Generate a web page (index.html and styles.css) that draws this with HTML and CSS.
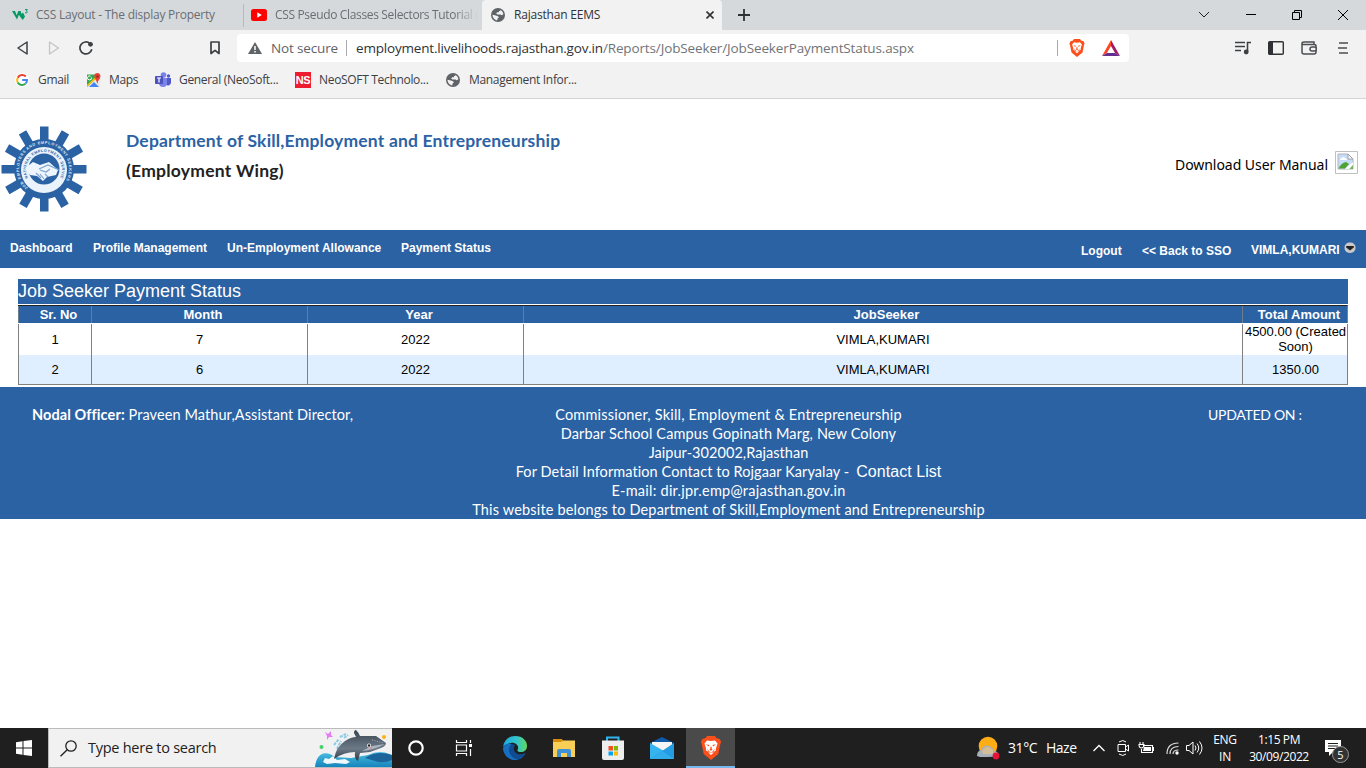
FILE: index.html
```html
<!DOCTYPE html>
<html lang="en">
<head>
<meta charset="utf-8">
<title>Rajasthan EEMS</title>
<link rel="stylesheet" href="styles.css">
</head>
<body>
<svg class="defs" width="0" height="0" aria-hidden="true">
  <defs>
    <symbol id="globe" viewBox="0 0 14 14">
      <circle cx="7" cy="7" r="7" fill="#5f6368"/>
      <path d="M9.300 1.700Q12.300 3.200 12.400 6.300L10.800 7.300 9.600 6.500H6.500L5.200 5.400 6.200 4.300H7.800L8.100 3H9.300Z" fill="#f2f2f2"/>
      <path d="M1.500 6.700 4.900 7.500 7 8.200 7.900 9.500 6.500 10.600 6.400 12.300C3.600 12 1.500 9.700 1.500 6.700Z" fill="#f2f2f2"/>
    </symbol>
    <symbol id="lion" viewBox="0 0 16 18">
      <path d="M4 1.500 5 0H11L12 1.500 14.500 2.200 15.600 4.500 15 6 13.500 13.500 8 18 2.500 13.500 1 6 .4 4.500 1.500 2.200Z" fill="#fb4f1c"/>
      <path d="M5 3.300 8 3.700 11 3.300 12.900 5.600 11.800 9 11.600 11 10 11.800 9.500 13 8 14.300 6.500 13 6 11.800 4.400 11 4.200 9 3.100 5.600Z" fill="#fff"/>
      <path d="M4.200 6.200 6.900 6.800 6.400 7.900ZM11.800 6.200 9.100 6.800 9.600 7.900ZM7.500 8H8.500V9.600L9.200 10.300 8 11.100 6.800 10.300 7.500 9.600ZM5 9.300 6.800 11.600 8 12.200 9.200 11.600 11 9.300 9.700 12.300H6.300Z" fill="#fb4f1c"/>
    </symbol>
  </defs>
</svg>

<header class="browser">
  <div class="tabs">
    <div class="tab tab-one">
      <svg width="16" height="12" viewBox="0 0 16 12"><path d="M0 2H3L4.700 6.300 6.300 2H8.600L9.500 5 11 3.500 13 7.500 10.800 11 8.700 8.500 6.900 5.800 5 10.500Z" fill="#059862"/><path d="M13 .6H15.300L14.300 2Q15.600 2.300 15.200 3.400 14.400 4.300 13 3.700" fill="none" stroke="#059862"/></svg>
      <span class="t-one">CSS Layout - The display Property</span>
    </div>
    <div class="tab tab-two">
      <svg width="16" height="12" viewBox="0 0 16 12"><rect width="16" height="12" rx="2.500" fill="#f00"/><path d="M6.300 3.300 10.800 6 6.300 8.700Z" fill="#fff"/></svg>
      <span class="t-two">CSS Pseudo Classes Selectors Tutorial (</span>
    </div>
    <div class="tab tab-active">
      <svg width="14" height="14"><use href="#globe"/></svg>
      <span class="t-three">Rajasthan EEMS</span>
      <svg class="close" width="8" height="8" viewBox="0 0 8 8"><path d="M.500.500 7.500 7.500M7.500.500.500 7.500" stroke="#303134" stroke-width="1.600"/></svg>
    </div>
    <svg class="plus" width="12" height="12" viewBox="0 0 12 12"><path d="M6 0V12M0 6H12" stroke="#303134" stroke-width="1.800"/></svg>
    <div class="window-buttons">
      <svg width="12" height="10" viewBox="0 0 12 10"><path d="M1 2 6 7 11 2" fill="none" stroke="#222"/></svg>
      <svg width="10" height="10" viewBox="0 0 10 10"><path d="M0 4.500H10" stroke="#000"/></svg>
      <svg width="10" height="10" viewBox="0 0 10 10"><path d="M.500 2.500H7.500V9.500H.500ZM2.500 2V.500H9.500V7.500H8" fill="none" stroke="#000"/></svg>
      <svg width="10" height="10" viewBox="0 0 10 10"><path d="M0 0 10 10M10 0 0 10" stroke="#000"/></svg>
    </div>
  </div>

  <div class="toolbar">
    <div class="history">
      <svg width="12" height="14" viewBox="0 0 12 14"><path d="M10 1V13L1 7Z" fill="none" stroke="#3c4043" stroke-width="1.500" stroke-linejoin="round"/></svg>
      <svg width="12" height="14" viewBox="0 0 12 14"><path d="M1.500 1V13L10.500 7Z" fill="none" stroke="#c2c4c6" stroke-width="1.300" stroke-linejoin="round"/></svg>
      <svg width="14" height="14" viewBox="0 0 14 14"><path d="M11 2.500A6 6 0 1 0 12.800 8.300" fill="none" stroke="#3c4043" stroke-width="1.700"/><circle cx="11.500" cy="3.300" r="2.400" fill="#3c4043"/></svg>
    </div>
    <svg class="bookmark" width="10" height="14" viewBox="0 0 10 14"><path d="M1 1H9V12.500L5 9.300 1 12.500Z" fill="none" stroke="#3c4043" stroke-width="1.700" stroke-linejoin="round"/></svg>
    <div class="address">
      <svg width="14" height="12" viewBox="0 0 14 12"><path d="M7 0 14 12H0Z" fill="#5f6368"/><path d="M7 4V8M7 9V10.500" stroke="#fff" stroke-width="1.500"/></svg>
      <span class="insecure">Not secure</span>
      <i class="bar"></i>
      <span class="url">employment.livelihoods.rajasthan.gov.in<em>/Reports/JobSeeker/JobSeekerPaymentStatus.aspx</em></span>
      <i class="bar bar-end"></i>
      <svg class="brave" width="16" height="18"><use href="#lion"/></svg>
      <svg class="bat" width="18" height="16" viewBox="0 0 18 16"><path d="M9 0 0 16 5 13 9 6Z" fill="#ff4724"/><path d="M9 0 18 16 13 13 9 6Z" fill="#9e1f63"/><path d="M0 16H18L13 13H5Z" fill="#662d91"/></svg>
    </div>
    <div class="tools">
      <svg width="16" height="14" viewBox="0 0 16 14"><path d="M0 1.500H10M0 5.500H10M0 9.500H6M12.500 11V1.500H16" fill="none" stroke="#3c4043" stroke-width="1.600"/><circle cx="11.200" cy="11" r="2.400" fill="#3c4043"/></svg>
      <svg width="16" height="14" viewBox="0 0 16 14"><rect x=".7" y=".7" width="14.600" height="12.600" rx="1" fill="none" stroke="#303134" stroke-width="1.400"/><path d="M1 1H5V13H1Z" fill="#303134"/></svg>
      <svg width="16" height="14" viewBox="0 0 16 14"><path d="M1 2.500V11Q1 13 3 13H13Q15 13 15 11V5Q15 3.500 13 3.500H2Q1 3.500 1 2.500 1 1 3 1H13V3" fill="none" stroke="#4b4e52" stroke-width="1.500"/><rect x="9" y="6" width="6.300" height="4" rx="2" fill="#f2f2f2" stroke="#4b4e52" stroke-width="1.500"/></svg>
      <svg width="10" height="12" viewBox="0 0 10 12"><path d="M1 1H10M0 6H9M1 11H10" stroke="#4b4e52" stroke-width="1.700"/></svg>
    </div>
  </div>

  <div class="bookmarks">
    <span class="bm bm-gmail"><svg width="14" height="14" viewBox="0 0 14 14"><circle cx="7" cy="7" r="7" fill="#fff"/><path d="M10.800 3.500A5 5 0 0 0 2.700 4.700" fill="none" stroke="#ea4335" stroke-width="2"/><path d="M2.700 4.700A5 5 0 0 0 2.700 9.500" fill="none" stroke="#fbbc05" stroke-width="2"/><path d="M2.700 9.500A5 5 0 0 0 10.500 10.600" fill="none" stroke="#34a853" stroke-width="2"/><path d="M10.500 10.600Q12.200 9 12 7H7.200" fill="none" stroke="#4285f4" stroke-width="2"/></svg><span>Gmail</span></span>
    <span class="bm bm-maps"><svg width="15" height="15" viewBox="0 0 15 15"><path d="M1 1.500H14V14H1Z" fill="#34a853"/><path d="M1 14 12 3.500 14 6V14Z" fill="#e8eaed"/><path d="M3 14 8 9 13 14Z" fill="#4285f4"/><path d="M1 12 12 1.500 13 3 1 14Z" fill="#fbbc05"/><path d="M5.500 4.500A2 2 0 1 1 4.600 3.200" fill="none" stroke="#fff"/><path d="M11.300 11Q10.800 8 9 5.500C7.300 2.500 8.800 0 11.300 0S15.500 2.500 13.700 5.500Q11.800 8 11.300 11Z" fill="#ea4335"/><circle cx="11.400" cy="3.600" r="1.300" fill="#a62c21"/></svg><span>Maps</span></span>
    <span class="bm bm-teams"><svg width="16" height="16" viewBox="0 0 16 16"><circle cx="8.500" cy="3" r="2.800" fill="#7b83eb"/><circle cx="13.500" cy="4" r="1.700" fill="#5059c9"/><path d="M10 6H16V10A3 3 0 0 1 10.500 12Z" fill="#5059c9"/><path d="M4 6H12V11A4 4 0 0 1 4 11Z" fill="#7b83eb"/><rect y="4" width="8" height="8" rx=".7" fill="#4b53bc"/><path d="M2 6H6M4 6V10.500" stroke="#fff" stroke-width="1.200"/></svg><span>General (NeoSoft...</span></span>
    <span class="bm bm-neo"><b>NS</b><span>NeoSOFT Technolo...</span></span>
    <span class="bm bm-info"><svg width="14" height="14"><use href="#globe"/></svg><span>Management Infor...</span></span>
  </div>
</header>

<main>
  <div class="masthead">
    <svg class="emblem" width="86" height="86" viewBox="-43 -43 86 86">
      <g fill="#2b62a4">
        <circle r="30"/>
        <path id="spoke" d="M-4-42.500H4.500V42.500H-4Z"/>
        <use href="#spoke" transform="rotate(30)"/><use href="#spoke" transform="rotate(60)"/><use href="#spoke" transform="rotate(90)"/><use href="#spoke" transform="rotate(120)"/><use href="#spoke" transform="rotate(150)"/>
      </g>
      <path id="outer-ring" d="M-16 19A25 25 0 1 1 16 19" fill="none"/>
      <text class="ring-text outer"><textPath href="#outer-ring" textLength="112">JOB EMPLOYERS AND EMPLOYMENT SEEKERS</textPath></text>
      <circle r="23" cy="1" fill="#eaf2fb"/>
      <circle r="15.500" fill="#2b62a4"/>
      <path id="inner-ring" d="M-16 9A18 18 0 1 1 16 9" fill="none"/>
      <text class="ring-text inner"><textPath href="#inner-ring" textLength="76">NATIONAL EMPLOYMENT SERVICE</textPath></text>
      <path d="M-19-1-11-7-4-4 5-7 14 1 12 6 3 8-1 12-7 7-14 6Z" fill="#eef5fc"/>
      <path d="M-5 0 4-4 15 1M-4 1 2 3 6 0M-8 4-3 9M-4 5 0 10M1 5 4 8" fill="none" stroke="#7ba4d2" stroke-width="1.200"/>
    </svg>
    <div class="department">
      <h1>Department of Skill,Employment and Entrepreneurship</h1>
      <h2>(Employment Wing)</h2>
    </div>
    <div class="manual">
      <span>Download User Manual</span>
      <svg width="23" height="23" viewBox="0 0 23 23"><path d="M.500.500H22.500V22.500H.500Z" fill="#fff" stroke="#c0c0c0"/><path d="M3 3H13L18 8V18H3Z" fill="#c7dcf8" stroke="#b0b3b8"/><path d="M13 3V8H18Z" fill="#fff" stroke="#9da0a5"/><path d="M5 9Q5 7 7 7 8 5 10 7 12 7 12 9Z" fill="#fff"/><path d="M3.500 17.500Q6 12 11 11L14 13 10 17.500Z" fill="#4da331"/><path d="M10 18 18 11V14L14.500 18Z" fill="#fff"/><path d="M16 16 18 14V18H14.500Z" fill="#78b85d"/></svg>
    </div>
  </div>

  <nav class="site-nav">
    <a class="n1">Dashboard</a><a class="n2">Profile Management</a><a class="n3">Un-Employment Allowance</a><a class="n4">Payment Status</a>
    <div class="account">
      <a class="n5">Logout</a><a class="n6">&lt;&lt; Back to SSO</a><a class="n7">VIMLA,KUMARI</a>
      <svg width="12" height="12" viewBox="0 0 12 12"><rect x=".5" y=".5" width="11" height="10.500" rx="5" fill="#c9c9c9"/><path d="M2.200 4H9.800V5.500L6 8.500 2.200 5.500Z" fill="#222"/></svg>
    </div>
  </nav>

  <section class="payments">
    <h3><span>Job Seeker Payment Status</span></h3>
    <div class="grid">
      <div class="row head"><span>Sr. No</span><span>Month</span><span>Year</span><span>JobSeeker</span><span>Total Amount</span></div>
      <div class="row first"><span>1</span><span>7</span><span>2022</span><span>VIMLA,KUMARI</span><span>4500.00 (Created<br>Soon)</span></div>
      <div class="row alt"><span>2</span><span>6</span><span>2022</span><span>VIMLA,KUMARI</span><span>1350.00</span></div>
    </div>
  </section>

  <footer class="site-footer">
    <p class="officer"><b>Nodal Officer:</b> Praveen Mathur,Assistant Director,</p>
    <div class="contact">
      <p class="c1">Commissioner, Skill, Employment &amp; Entrepreneurship</p>
      <p class="c2">Darbar School Campus Gopinath Marg, New Colony</p>
      <p class="c3">Jaipur-302002,Rajasthan</p>
      <p class="c4"><span>For Detail Information Contact to Rojgaar Karyalay -</span><a>Contact List</a></p>
      <p class="c5">E-mail: dir.jpr.emp@rajasthan.gov.in</p>
      <p class="c6">This website belongs to Department of Skill,Employment and Entrepreneurship</p>
    </div>
    <p class="updated">UPDATED ON :</p>
  </footer>
</main>

<div class="taskbar">
  <div class="start"><svg width="16" height="16" viewBox="0 0 16 16"><path d="M0 2.200 6.500 1.200V7.500H0ZM7.500 1 16 0V7.500H7.500ZM0 8.500H6.500V14.800L0 13.800ZM7.500 8.500H16V16L7.500 15Z" fill="#fff"/></svg></div>
  <div class="search">
    <svg width="17" height="17" viewBox="0 0 17 17"><circle cx="11" cy="6" r="5.200" fill="none" stroke="#222" stroke-width="1.300"/><path d="M7.200 9.800.500 16.300" stroke="#222" stroke-width="1.400"/></svg>
    <span>Type here to search</span>
    <svg class="whale" width="77" height="37" viewBox="0 0 77 37">
      <defs>
        <linearGradient id="sea" x2="0" y2="1"><stop stop-color="#4bbfe0"/><stop offset="1" stop-color="#1684bd"/></linearGradient>
        <linearGradient id="skin" x2="0" y2="1"><stop stop-color="#39444f"/><stop offset=".6" stop-color="#6c7a88"/><stop offset="1" stop-color="#2f3943"/></linearGradient>
      </defs>
      <path d="M0 37Q1 26 8 23.500 14 22 20 27L36 28 53 25Q61 21 70 22.500L77 25V37Z" fill="url(#sea)"/>
      <path d="M50 28Q62 20 77 25V30Q68 34 60 31Z" fill="#1b659b"/>
      <path d="M8 32 10 28 14 29 18 26 22 30 30 29 35 32 31 34 20 33 12 34Z" fill="#eef8fc"/>
      <path d="M19 15 24 9M22 19 26 11M25 7 31 4M29 8 33 5" stroke="#8bc9e8" stroke-width="2" stroke-dasharray="3 1"/>
      <path d="M19 29Q21 17 30 11 36 7 41 7L39 3Q39 0 41 0 44 3 45 6L61 6 71 13Q71 16 66 18L55 22 45 23 43 31Q39 29 40 22 29 22 19 29Z" fill="url(#skin)"/>
      <path d="M47 21Q59 20 70 14L57 16Z" fill="#aab5be"/><path d="M57 10 69 13" stroke="#aab5be" stroke-dasharray="1 1.500" fill="none"/>
      <circle cx="54" cy="15.500" r="2" fill="#fff"/><circle cx="54" cy="15.500" r="1.200" fill="#222"/><circle cx="56" cy="18" r="1.300" fill="#d9909d"/>
      <path d="M10 2 13 4 16 1 16 5 18 7 14 7 12 10 12 6Z" fill="#e57bf5"/><circle cx="6.500" cy="17" r="2" fill="#45d06c"/><circle cx="69" cy="7" r="2" fill="#ffb20f"/>
    </svg>
  </div>
  <div class="apps">
    <span class="app app-narrow"><svg width="16" height="16" viewBox="0 0 16 16"><circle cx="8" cy="8" r="6.700" fill="none" stroke="#fff" stroke-width="2.200"/></svg></span>
    <span class="app app-view"><svg width="18" height="16" viewBox="0 0 18 16"><path d="M1.500 0V2.500H11.500V0M1.500 16V13.500H11.500V16M1.500 5H11.500V11H1.500ZM15.500 0V3M15.500 9V16" fill="none" stroke="#fff" stroke-width="1.200"/><path d="M14 4H17V7H14Z" fill="#fff"/></svg></span>
    <span class="app"><svg width="24" height="24" viewBox="0 0 24 24"><defs><linearGradient id="edge"><stop stop-color="#1ba9e1"/><stop offset=".6" stop-color="#35c6c8"/><stop offset="1" stop-color="#62d85a"/></linearGradient></defs><path d="M0 11C1 4 6 0 12 0 20 0 24 5 24 10 24 14 21 16 18 16 15 16 14 15 14.500 14 17 10 12 6 8 7Q2 8 0 11Z" fill="url(#edge)"/><path d="M0 12C2 7 6 7 9 8 6 10 7 19 15 19 18 19 21 18 22.500 17 20 22 16 24 12 24 5 24 0 18 0 12Z" fill="#176fc1"/><path d="M9 8Q4 12 7 18 10 23 15 23.500 20 22 22.500 17 18 20 13 17 9 14 12 9Z" fill="#104c91"/></svg></span>
    <span class="app"><svg width="22" height="18" viewBox="0 0 22 18"><path d="M0 0H8.500L10 1.500H22V18H0Z" fill="#f9ce57"/><path d="M0 0H8.500L10 2 8 3H0Z" fill="#d98c0a"/><path d="M4 18V12Q4 10 6 10H16Q18 10 18 12V18H14V14H8V18Z" fill="#3c91d7"/></svg></span>
    <span class="app"><svg width="24" height="24" viewBox="0 0 24 24"><path d="M6 6V1.500H17.500V6" fill="none" stroke="#30b5ed" stroke-width="2"/><path d="M1 4.500H23V22Q23 24 21 24H3Q1 24 1 22Z" fill="#eee"/><path d="M7.500 10H12V14.500H7.500Z" fill="#f25022"/><path d="M13 10H17V14.500H13Z" fill="#7fba00"/><path d="M7.500 15.500H12V19.500H7.500Z" fill="#00a4ef"/><path d="M13 15.500H17V19.500H13Z" fill="#ffb900"/></svg></span>
    <span class="app"><svg width="24" height="22" viewBox="0 0 24 22"><path d="M0 6 12 0 24 6V22H0Z" fill="#0e59a9"/><path d="M2 5H22V14H2Z" fill="#f5f5f5"/><path d="M0 6 14 14 24 22H0Z" fill="#36b4ef"/><path d="M24 6 12 14 0 22H24Z" fill="#249ce1"/><path d="M12 14 24 22H0Z" fill="#32aceb"/></svg></span>
    <span class="app current"><svg width="22" height="24"><use href="#lion"/></svg></span>
  </div>
  <div class="tray">
    <svg class="weather" width="24" height="24" viewBox="0 0 24 24"><circle cx="12" cy="10" r="9.300" fill="#ffad14"/><path d="M1 20Q1 15 5 14 8 8 13 10 17 11 18 15 22 15 23 20 20 21 4 21Z" fill="#a7b0bb"/><path d="M6 15Q11 7 17 14L17 18H7Z" fill="#d4bd97"/><circle cx="20" cy="20" r="3.400" fill="#e81238"/></svg>
    <span class="temp">31°C</span><span class="haze">Haze</span>
    <svg class="chevron" width="12" height="8" viewBox="0 0 12 8"><path d="M.500 7 6 1.500 11.500 7" fill="none" stroke="#fff" stroke-width="1.300"/></svg>
    <svg class="meet" width="12" height="16" viewBox="0 0 12 16"><path d="M1 4.500H8.500V11.500H1ZM8.500 7 11.500 5V11L8.500 9M2 2Q6-1 9 2M2 14Q6 17 9 14" fill="none" stroke="#fff"/></svg>
    <svg class="battery" width="16" height="12" viewBox="0 0 16 12"><path d="M5 3.500H14.500V10.500H3.500V7M2 0V2M5 0V2M1 2.500H6V4Q5 6 3.500 6 1 6 1 2.500ZM15.500 5V9" fill="none" stroke="#fff" stroke-width="1.100"/><path d="M6 5H13V9H5Z" fill="#fff"/></svg>
    <svg class="wifi" width="13" height="13" viewBox="0 0 13 13"><path d="M1 12Q1 1 12.500 1M4 12Q4 4.500 12.500 4.500M7 12Q7 8 12.500 8" fill="none" stroke="#ddd" stroke-width="1.200"/><circle cx="11" cy="11" r="1.700" fill="#fff"/></svg>
    <svg class="sound" width="17" height="14" viewBox="0 0 17 14"><path d="M.500 4.500H3L7 1V13L3 9.500H.500ZM9 4.500Q11 7 9 9.500M11 2.500Q14.500 7 11 11.500M13.500.500Q18.500 7 13.500 13.500" fill="none" stroke="#fff"/></svg>
    <span class="language"><b>ENG</b><b>IN</b></span>
    <span class="clock"><b class="time">1:15 PM</b><b class="date">30/09/2022</b></span>
    <span class="notice"><svg width="16" height="16" viewBox="0 0 16 16"><path d="M0 0H16V12H8L4 16V12H0Z" fill="#fff"/><path d="M3 3.500H13M3 6H13M3 8.500H10" stroke="#202020"/></svg><i>5</i></span>
  </div>
</div>
</body>
</html>
```
FILE: styles.css
```css
* { box-sizing: border-box; }
body { margin: 0; width: 1366px; height: 768px; overflow: hidden; display: flex; flex-direction: column; background: #fff; font-family: "Liberation Sans", Arial, sans-serif; }
h1, h2, h3, p { margin: 0; font-weight: normal; }
svg { display: block; flex: none; }
span, a, b { white-space: nowrap; }
.defs { position: absolute; }

/* Browser window */
.browser { height: 99px; background: #f2f2f2; border-bottom: 1px solid #d3d4d5; font: 12px/16px "Open Sans", sans-serif; color: #3c4043; flex: none; }
.tabs { display: flex; height: 30px; background: #d5d9dc; align-items: center; }
.tab { display: flex; align-items: center; height: 30px; gap: 8px; color: #6a6e72; }
.tab-one { width: 243px; padding-left: 12px; }
.tab-two { width: 239px; padding-left: 7px; border-left: 1px solid #b6babd; height: 23px; }
.tab-active { width: 240px; padding: 0 8px 0 9px; background: #f2f2f2; border-radius: 4px 4px 0 0; color: #303134; gap: 9px; }
.tab-one span { letter-spacing: -.23px; }
.tab-two span { letter-spacing: -.34px; width: 203px; overflow: hidden; -webkit-mask-image: linear-gradient(90deg, #000 88%, transparent); mask-image: linear-gradient(90deg, #000 88%, transparent); }
.tab-active span { letter-spacing: -.2px; }
.close { margin-left: auto; }
.plus { margin-left: 16px; }
.window-buttons { display: flex; gap: 36px; margin: 0 18px 0 auto; align-items: center; }
.toolbar { display: flex; align-items: center; height: 36px; }
.history { display: flex; gap: 19px; padding-left: 17px; width: 210px; }
.bookmark { margin-right: 17px; }
.address { display: flex; align-items: center; width: 892px; height: 28px; background: #fff; border-radius: 4px; padding-left: 11px; font-size: 14px; }
.insecure { margin-left: 9px; width: 75px; letter-spacing: -.15px; color: #5f6368; font-size: 13.500px; }
.bar { width: 1px; height: 16px; background: #a9acaf; }
.url { margin-left: 9px; font-size: 13.500px; letter-spacing: -.19px; color: #303134; }
.url em { font-style: normal; color: #707478; letter-spacing: -.13px; }
.bar-end { margin-left: auto; }
.brave { margin: 0 17px 0 11px; }
.bat { margin-right: 9px; }
.tools { display: flex; align-items: center; gap: 17px; margin-left: 106px; }
.tools svg:last-child { margin-left: 4px; }
.bookmarks { display: flex; align-items: center; height: 28px; padding-left: 15px; }
.bm { display: flex; align-items: center; }
.bm span { letter-spacing: -.32px; }
.bm-gmail { width: 71px; gap: 9px; }
.bm-maps { width: 69px; gap: 8px; }
.bm-teams { width: 140px; gap: 8px; }
.bm-neo { width: 151px; gap: 8px; }
.bm-neo b { width: 16px; height: 16px; background: #ed1c2e; color: #fff; font: bold 11px/16px "Liberation Sans", sans-serif; text-align: center; letter-spacing: -.5px; }
.bm-info { gap: 9px; }

/* Page */
main { flex: 1; }
.masthead { display: flex; height: 131px; padding: 27px 8px 0 1px; }
.ring-text { fill: #dce9f7; font: bold 3.8px "Liberation Sans", sans-serif; }
.ring-text.inner { fill: #2b62a4; }
.department { padding: 0 0 0 39px; font-family: Lato, sans-serif; }
.department h1, .department h2 { font-size: 17.500px; line-height: 30px; font-weight: bold; letter-spacing: .18px; }
.department h1 { color: #2b62a4; }
.department h2 { color: #222; letter-spacing: .25px; }
.manual { display: flex; gap: 7px; margin-left: auto; padding-top: 25px; font: 14px/28px "Noto Sans", sans-serif; letter-spacing: -.04px; color: #000; }
.site-nav { display: flex; height: 38px; background: #2b62a4; padding: 9px 10px 0; font: bold 12px/18px "Liberation Sans", sans-serif; color: #fff; }
.n1 { width: 83px; } .n2 { width: 134px; } .n3 { width: 174px; }
.account { display: flex; margin-left: auto; padding-top: 3px; }
.n5 { width: 61px; } .n6 { width: 109px; } .n7 { width: 93px; margin-top: -1px; }
.payments { padding: 11px 18px 0; height: 119px; }
.payments h3 { height: 25px; background: #2b62a4; color: #fff; font-size: 18px; line-height: 24px; margin-bottom: 1px; }
.row { display: grid; grid-template-columns: 73px 216px 216px 719px 106px; border-right: 1px solid #808080; height: 30px; font-size: 13px; line-height: 15px; text-align: center; }
.row span { display: flex; align-items: center; justify-content: center; border-left: 1px solid #808080; }
.row.head { height: 18px; background: #2b62a4; color: #fff; font-weight: bold; border-top: 1px solid #222; margin-bottom: 1px; }
.row.head span { padding-left: 7px; border-color: #6d7c8e; }
.row.first { height: 31px; }
.row.first span:last-child { padding-bottom: 1px; }
.row.alt { background: #dfefff; border-bottom: 1px solid #808080; }
.site-footer { display: flex; height: 132px; background: #2b62a4; color: #fff; font: 14.500px/19px Lato, sans-serif; padding-top: 18px; }
.officer { width: 456px; padding-left: 32px; letter-spacing: .09px; }
.contact { width: 545px; text-align: center; }
.contact p { height: 19px; }
.c1 { letter-spacing: .2px; }
.c2 { letter-spacing: .13px; }
.c3 { letter-spacing: .05px; }
.c4 span { letter-spacing: .08px; }
.c4 a { font: 16px/19px "Liberation Sans", sans-serif; margin-left: 7px; letter-spacing: .05px; }
.c5 { letter-spacing: .25px; }
.c6 { letter-spacing: .17px; }
.updated { padding-left: 207px; font-size: 14px; letter-spacing: -.28px; }

/* Taskbar */
.taskbar { display: flex; height: 40px; background: #1f1f1f; color: #fff; font: 12px/18px "Open Sans", sans-serif; flex: none; }
.start { width: 48px; display: flex; align-items: center; justify-content: center; }
.search { display: flex; align-items: center; width: 344px; background: #f1f1f1; border: 1px solid #bbb; border-right: 0; color: #222; font-size: 14.500px; padding-left: 11px; }
.search span { margin-left: 11px; letter-spacing: -.26px; }
.whale { margin-left: auto; align-self: flex-end; }
.apps { display: flex; }
.app { width: 49px; display: flex; align-items: center; justify-content: center; }
.app-narrow { width: 48px; }
.app-view { width: 50px; padding-right: 3px; }
.app.current { width: 49px; background: #4a4a4a; border-bottom: 2px solid #76b9ed; padding-top: 2px; }
.tray { display: flex; align-items: center; margin-left: auto; }
.temp { margin-left: 8px; width: 38px; font-size: 14px; letter-spacing: -.4px; }
.haze { width: 47px; font-size: 14px; letter-spacing: -.5px; }
.meet { margin-left: 12px; } .battery { margin-left: 9px; } .wifi { margin-left: 12px; } .sound { margin-left: 7px; }
.language, .clock { display: flex; flex-direction: column; align-items: center; }
.tray b { font-weight: normal; line-height: 17px; }
.clock .time { margin-top: -1px; }
.language { width: 44px; letter-spacing: -.3px; }
.clock { width: 64px; letter-spacing: -.4px; }
.notice { position: relative; margin-left: 14px; width: 41px; }
.notice i { position: absolute; left: 7px; top: 6px; width: 17px; height: 17px; border: 1px solid #999; border-radius: 50%; background: #333; font: 11px/15px "Open Sans", sans-serif; text-align: center; }
```
